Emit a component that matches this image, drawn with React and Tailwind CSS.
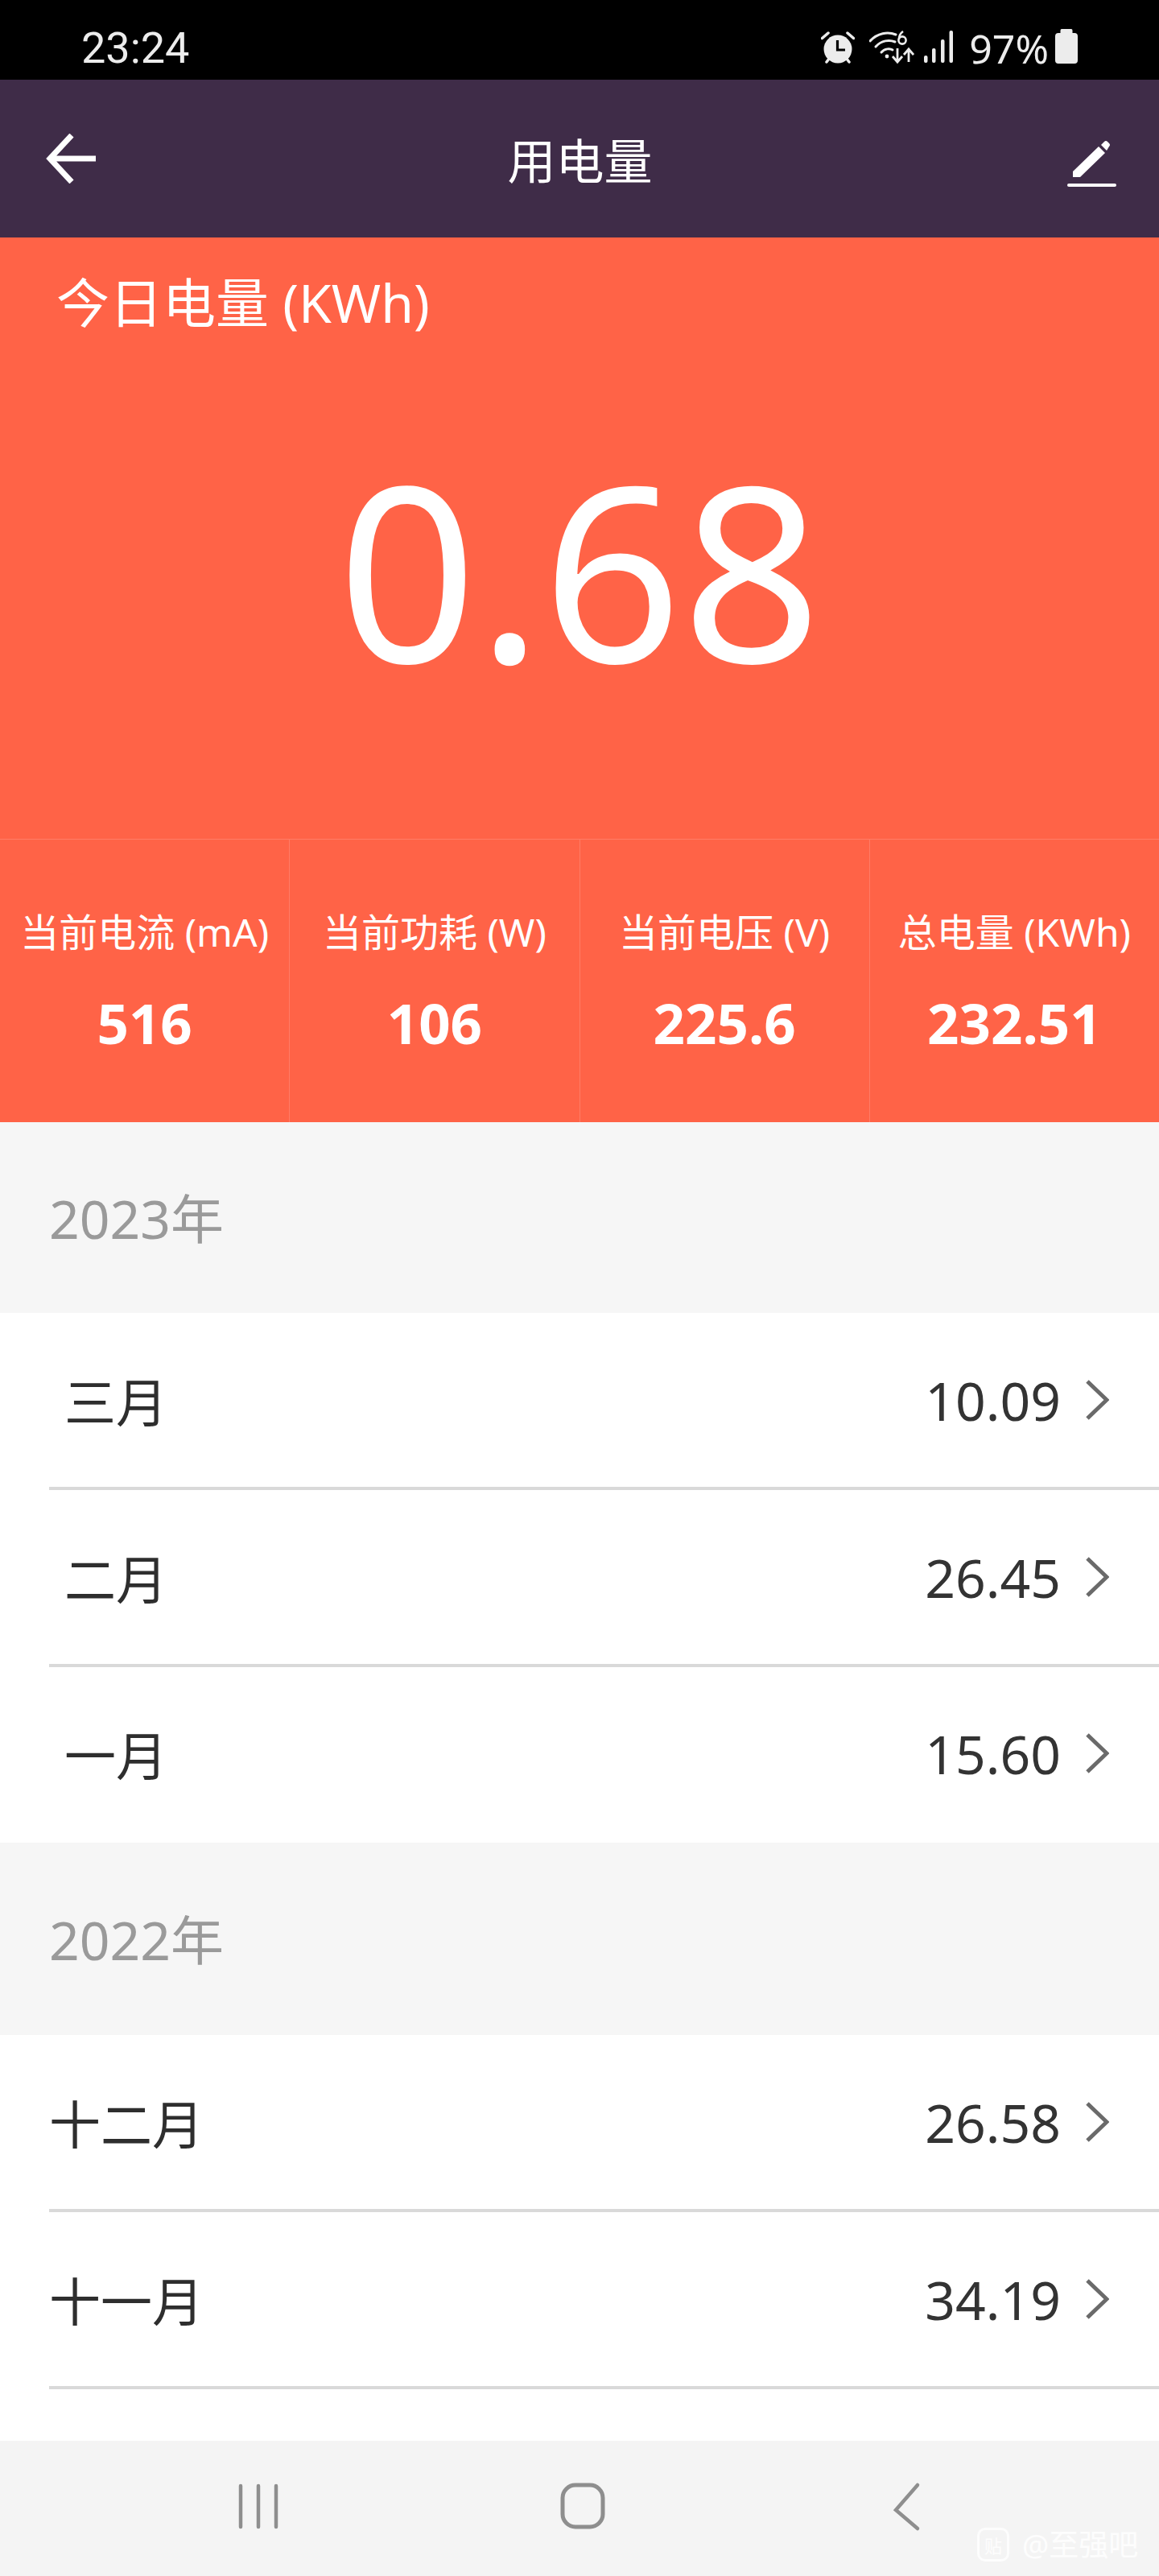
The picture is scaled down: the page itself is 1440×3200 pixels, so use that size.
const SANS = "font-['Noto_Sans','Noto_Sans_CJK_SC',sans-serif]";

function Chevron() {
  return (
    <svg width="30" height="52" viewBox="0 0 30 52" className="ml-[30px] shrink-0">
      <path d="M3 3 L27 26 L3 49" fill="none" stroke="#6a6a6a" strokeWidth="5" />
    </svg>
  );
}

function Row({ label, value, pad, last }) {
  return (
    <div className="bg-white pl-[61px]">
      <div className={`flex items-center justify-between border-b-[4px] pr-[62px] ${last ? "h-[218px] border-white" : "h-[220px] border-[#d9d9d9]"}`}>
        <span className={`${pad} pb-[2px] text-[64px] leading-[88px] text-[#2e2e2e] font-['Noto_Sans_CJK_SC','Noto_Sans',sans-serif]`}>{label}</span>
        <span className="flex items-center">
          <span className="text-[66px] leading-none text-[#333] font-['Noto_Sans',sans-serif]">{value}</span>
          <Chevron />
        </span>
      </div>
    </div>
  );
}

function Section({ year, h }) {
  return (
    <div className={`flex items-center bg-[#f6f6f6] pl-[61px] ${h}`}>
      <span className={`text-[66px] leading-[90px] text-[#9a9a9a] ${SANS}`}>{year}</span>
    </div>
  );
}

function Stat({ label, value, last }) {
  return (
    <div className={`flex flex-1 flex-col items-center ${last ? "" : "border-r-[1px] border-[#ff7c66]"}`}>
      <div className={`mt-[83px] whitespace-nowrap text-[48px] leading-[64px] text-white ${SANS}`}>{label}</div>
      <div className="mt-[40px] text-[69px] leading-[80px] font-bold text-white font-['Noto_Sans',sans-serif]">{value}</div>
    </div>
  );
}

function Alarm() {
  return (
    <svg width="42" height="42" viewBox="0 0 42 42" fill="#ececec">
      <circle cx="21" cy="23" r="17.5" />
      <path d="M1.5 9.5 L9 3 M40.5 9.5 L33 3 M7 39 L10 35 M35 39 L32 35" stroke="#ececec" strokeWidth="3.5" strokeLinecap="round" />
      <path d="M20.5 12 V24 H30" fill="none" stroke="#000" strokeWidth="3.2" />
    </svg>
  );
}

function Wifi() {
  return (
    <svg width="56" height="42" viewBox="0 0 56 42" fill="none" stroke="#ececec" strokeWidth="3">
      <path d="M1 13 C10 3 23 1 33 5" strokeLinecap="round" />
      <path d="M8 20 C15 12 25 11 32 14" strokeLinecap="round" />
      <path d="M15 27 C19 22 26 22 29 24" strokeLinecap="round" />
      <circle cx="22" cy="32" r="2.4" fill="#ececec" stroke="none" />
      <circle cx="41" cy="12" r="4.6" strokeWidth="2.6" />
      <path d="M37 11 C37 6 39 3 42 1" strokeWidth="2.6" />
      <path d="M35 22 V38 M29 32 L35 39 L41 32 M49 39 V24 M43 30 L49 23 L55 30" strokeWidth="2.8" />
    </svg>
  );
}

function Signal() {
  return (
    <svg width="38" height="42" viewBox="0 0 38 42" fill="#ececec">
      <rect x="1" y="31" width="4.5" height="9" rx="2" />
      <rect x="11" y="22" width="4.5" height="18" rx="2" />
      <rect x="22" y="11" width="4.5" height="29" rx="2" />
      <rect x="32.5" y="0" width="4.5" height="40" rx="2" />
    </svg>
  );
}

function Battery() {
  return (
    <svg width="28" height="43" viewBox="0 0 28 43" fill="#ececec">
      <path d="M8 0 H20 Q21.5 0 21.5 2 V5 H24 Q28 5 28 9 V39 Q28 43 24 43 H4 Q0 43 0 39 V9 Q0 5 4 5 H6.5 V2 Q6.5 0 8 0 Z" />
    </svg>
  );
}

export default function App() {
  return (
    <div className="relative flex h-[3200px] w-[1440px] flex-col overflow-hidden bg-white">
      {/* status bar */}
      <div className="flex h-[99px] shrink-0 items-start bg-black pl-[101px] pr-[101px] pt-[30px] text-[#ececec]">
        <span className="text-[54px] leading-[60px] font-['Roboto',sans-serif]">23:24</span>
        <div className="ml-auto flex items-start pt-[8px]">
          <Alarm />
          <span className="ml-[18px]"><Wifi /></span>
          <span className="ml-[11px]"><Signal /></span>
          <span className="ml-[19px] -mt-[8px] text-[50px] leading-[60px] font-['Noto_Sans',sans-serif]">97%</span>
          <span className="ml-[8px] -mt-[2px]"><Battery /></span>
        </div>
      </div>

      {/* header */}
      <div className="flex h-[196px] shrink-0 items-center justify-between bg-[#3f2c48] pl-[57px] pr-[53px]">
        <svg width="62" height="62" viewBox="0 0 62 62" fill="none" stroke="#fff" strokeWidth="7">
          <path d="M62 31 H5 M32 2 L5 31 L32 60" />
        </svg>
        <span className="mr-[4px] text-[60px] text-white font-['Noto_Sans_CJK_SC',sans-serif]">用电量</span>
        <svg width="61" height="58" viewBox="0 0 61 58" fill="#fff" className="mt-[12px]">
          <path d="M7 46 V39 L39 8 L47 16 L16 46 Z" />
          <path d="M42 6 L46 2 Q48 0 50 2 L52 4 Q54 6 52 8 L49 13 Z" />
          <rect x="0" y="54" width="61" height="4" rx="2" />
        </svg>
      </div>

      {/* today */}
      <div className="flex h-[748px] shrink-0 flex-col border-b-[1px] border-[#ff7c66] bg-[#ff6347]">
        <div className={`ml-[70px] mt-[38px] text-[66px] leading-[84px] text-white ${SANS}`}>今日电量 (KWh)</div>
        <div className="mt-[114px] text-center text-[303px] leading-[350px] text-white font-['Noto_Sans',sans-serif]">0.68</div>
      </div>

      {/* stats */}
      <div className="flex h-[351px] shrink-0 bg-[#ff6347]">
        <Stat label="当前电流 (mA)" value="516" />
        <Stat label="当前功耗 (W)" value="106" />
        <Stat label="当前电压 (V)" value="225.6" />
        <Stat label="总电量 (KWh)" value="232.51" last />
      </div>

      <Section year="2023年" h="h-[237px]" />
      <Row label="三月" value="10.09" pad="pl-[19px]" />
      <Row label="二月" value="26.45" pad="pl-[19px]" />
      <Row label="一月" value="15.60" pad="pl-[19px]" last />
      <Section year="2022年" h="h-[239px]" />
      <Row label="十二月" value="26.58" pad="pl-0" />
      <Row label="十一月" value="34.19" pad="pl-0" />
      <div className="h-[64px] shrink-0 bg-white" />

      {/* nav */}
      <div className="relative flex grow items-center bg-[#f4f4f4]">
        <svg width="1440" height="168" viewBox="0 0 1440 168" fill="none" stroke="#8e8e8e">
          <path d="M299 56 V107 M321 56 V107 M343 56 V107" strokeWidth="4.5" strokeLinecap="round" />
          <rect x="699" y="55" width="50" height="52" rx="16" strokeWidth="5" />
          <path d="M1140 55 L1113 86 L1140 109" strokeWidth="4.5" strokeLinecap="round" />
        </svg>
        <div className="absolute left-[1214px] top-[108px] flex items-center text-white/80">
          <div className="flex h-[42px] w-[40px] items-center justify-center rounded-[10px] border-[3px] border-white/80 text-[22px] font-['Noto_Sans_CJK_SC',sans-serif]">贴</div>
          <span className="ml-[16px] text-[37px] leading-[40px] font-['Noto_Sans','Noto_Sans_CJK_SC',sans-serif]">@至强吧</span>
        </div>
      </div>
    </div>
  );
}
